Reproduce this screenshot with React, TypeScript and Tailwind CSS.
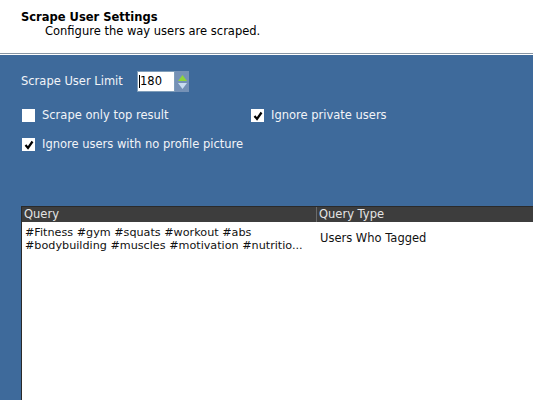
import { FunctionComponent } from "react";

interface CheckProps {
    label: string;
    checked?: boolean;
}

const CheckItem: FunctionComponent<CheckProps> = ({label, checked})=>{
    return <div className="flex items-center h-[13px]">
        <div className="w-[13px] h-[13px] bg-white flex items-center justify-center">
            {checked && <svg width="10" height="10" viewBox="0 0 10 10">
                <path d="M1.5 5 L4 8 L8.5 1.5" fill="none" stroke="#000" strokeWidth="2.2" />
            </svg>}
        </div>
        <span className="ml-[7px] text-[11.5px] text-[#f2f4f8] leading-none">{label}</span>
    </div>;
}

const SpinBox = ()=>{
    return <div className="flex h-[21px]">
        <div className="w-[38px] h-full bg-white border border-[#7f9db9] flex items-center pl-[1px] text-[11.5px] text-black">
            <span className="w-[1px] h-[13px] bg-black"></span>
            <span>180</span>
        </div>
        <div className="w-[14px] h-full bg-[#7591b6] flex flex-col items-center justify-center gap-[2px]">
            <svg width="9" height="6" viewBox="0 0 9 6"><path d="M0 6 L4.5 0 L9 6 Z" fill="#8fd43a" /></svg>
            <svg width="9" height="6" viewBox="0 0 9 6"><path d="M0 0 L9 0 L4.5 6 Z" fill="#c9dcf0" /></svg>
        </div>
    </div>;
}

const rows = [
    {
        query: "#Fitness #gym #squats #workout #abs\n#bodybuilding #muscles #motivation #nutritio...",
        type: "Users Who Tagged",
    },
];

const App = ()=>{
    return <div
        className="w-[533px] h-[400px] overflow-hidden flex flex-col bg-white"
        style={{fontFamily: '"DejaVu Sans", Verdana, sans-serif'}}
    >
        {/* title strip */}
        <div className="h-[53px] pl-[21px] pt-[10px] text-[11.5px] leading-[14px] text-black">
            <div className="font-bold">Scrape User Settings</div>
            <div className="pl-[24px]">Configure the way users are scraped.</div>
        </div>
        <div className="h-[1px] bg-[#8896a4]"></div>
        <div className="h-[1px] bg-white"></div>

        <div className="flex-1 bg-[#3e6a9b] flex flex-col">
            <div className="flex items-center pl-[21px] mt-[16px]">
                <span className="text-[11.5px] text-[#f2f4f8] w-[116px]">Scrape User Limit</span>
                <SpinBox />
            </div>

            <div className="flex pl-[22px] mt-[17px]">
                <div className="w-[229px]"><CheckItem label="Scrape only top result" /></div>
                <CheckItem label="Ignore private users" checked />
            </div>
            <div className="pl-[22px] mt-[16px]">
                <CheckItem label="Ignore users with no profile picture" checked />
            </div>

            {/* query grid */}
            <div className="ml-[21px] mt-[55px] flex-1 bg-white border-l border-t border-[#2a2a2a] flex flex-col text-[11.2px]">
                <div className="flex h-[15px] bg-[#3d3d3d] text-[#e4e4e4] leading-[15px] text-[11.5px]">
                    <div className="w-[295px] pl-[2px] border-r border-[#6a6a6a]">Query</div>
                    <div className="flex-1 pl-[2px]">Query Type</div>
                </div>
                {rows.map((row, i)=>{
                    return <div key={i} className="flex text-[#111] pt-[4px]">
                        <div className="w-[296px] pl-[3px] leading-[13px] whitespace-pre">{row.query}</div>
                        <div className="flex-1 pl-[2px] flex items-center text-[11.5px]">{row.type}</div>
                    </div>;
                })}
            </div>
        </div>
    </div>;
}

export default App;
